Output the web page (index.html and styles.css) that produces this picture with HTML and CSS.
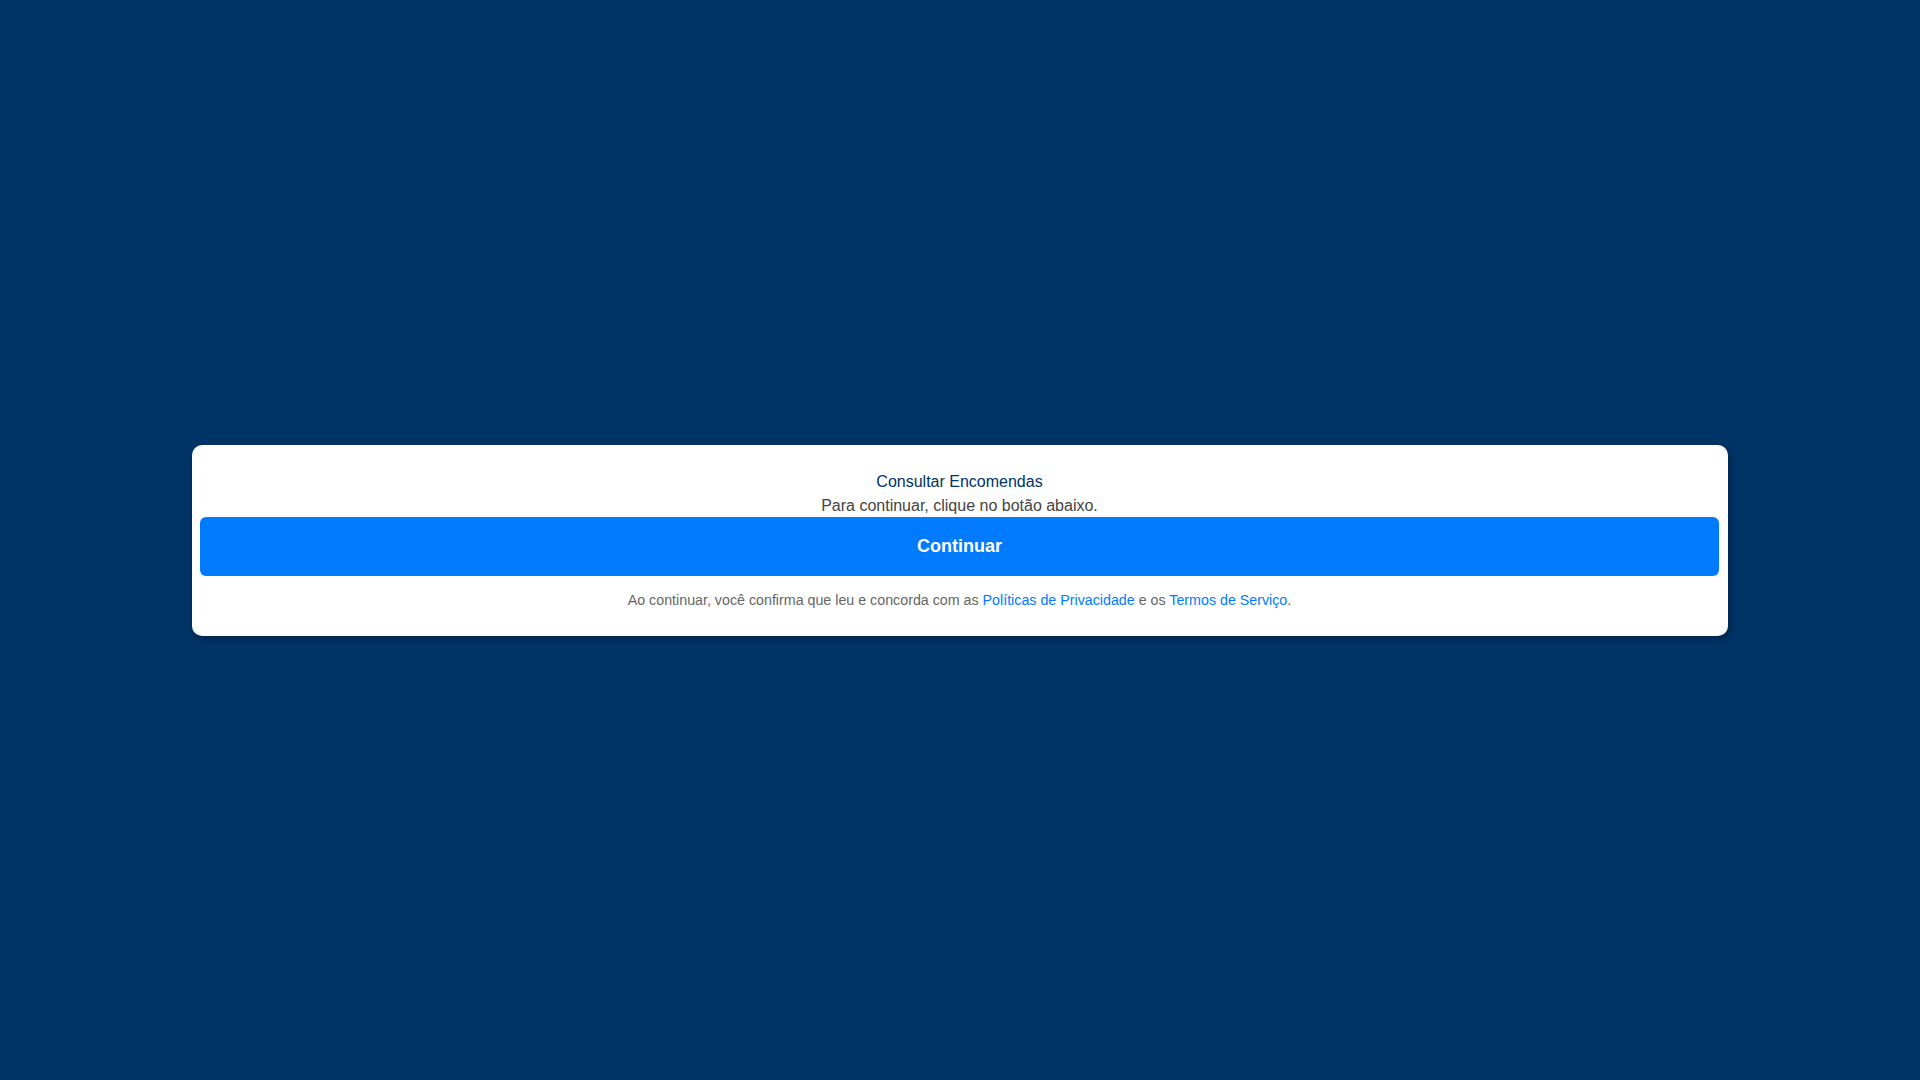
FILE: index.html
```html
<!DOCTYPE html>
<html lang="pt-BR">
<head>
<meta charset="utf-8">
<title>Consultar Encomendas</title>
<link rel="stylesheet" href="styles.css">
</head>
<body>
<main class="page">
  <section class="card">
    <h1 class="title">Consultar Encomendas</h1>
    <p class="subtitle">Para continuar, clique no botão abaixo.</p>
    <button class="btn" type="button">Continuar</button>
    <p class="terms">Ao continuar, você confirma que leu e concorda com as <a href="#">Políticas de Privacidade</a> e os <a href="#">Termos de Serviço</a>.</p>
  </section>
</main>
</body>
</html>
```

FILE: styles.css
```css
html, body {
  margin: 0;
  padding: 0;
  height: 100%;
}
body {
  background: #003366;
  font-family: "Liberation Sans", Arial, sans-serif;
}
.page {
  height: 100%;
  display: flex;
  align-items: center;
  justify-content: center;
}
.card {
  width: 1536px;
  box-sizing: border-box;
  background: #ffffff;
  border-radius: 10px;
  box-shadow: 2px 3px 6px rgba(0, 0, 0, 0.3);
  padding: 25px 9px 25px 8px;
  text-align: center;
}
.title {
  margin: 0;
  font-size: 16px;
  font-weight: normal;
  line-height: 24px;
  color: #003366;
}
.subtitle {
  margin: 0;
  font-size: 16px;
  line-height: 23px;
  color: #444444;
}
.btn {
  display: block;
  width: 100%;
  height: 59px;
  border: none;
  border-radius: 6px;
  background: #007bff;
  color: #ffffff;
  font-family: "Liberation Sans", Arial, sans-serif;
  font-size: 18px;
  font-weight: bold;
  cursor: pointer;
}
.terms {
  margin: 14px 0 0;
  font-size: 14.25px;
  line-height: 21px;
  color: #666666;
}
.terms a {
  color: #007bff;
  text-decoration: none;
}
```
